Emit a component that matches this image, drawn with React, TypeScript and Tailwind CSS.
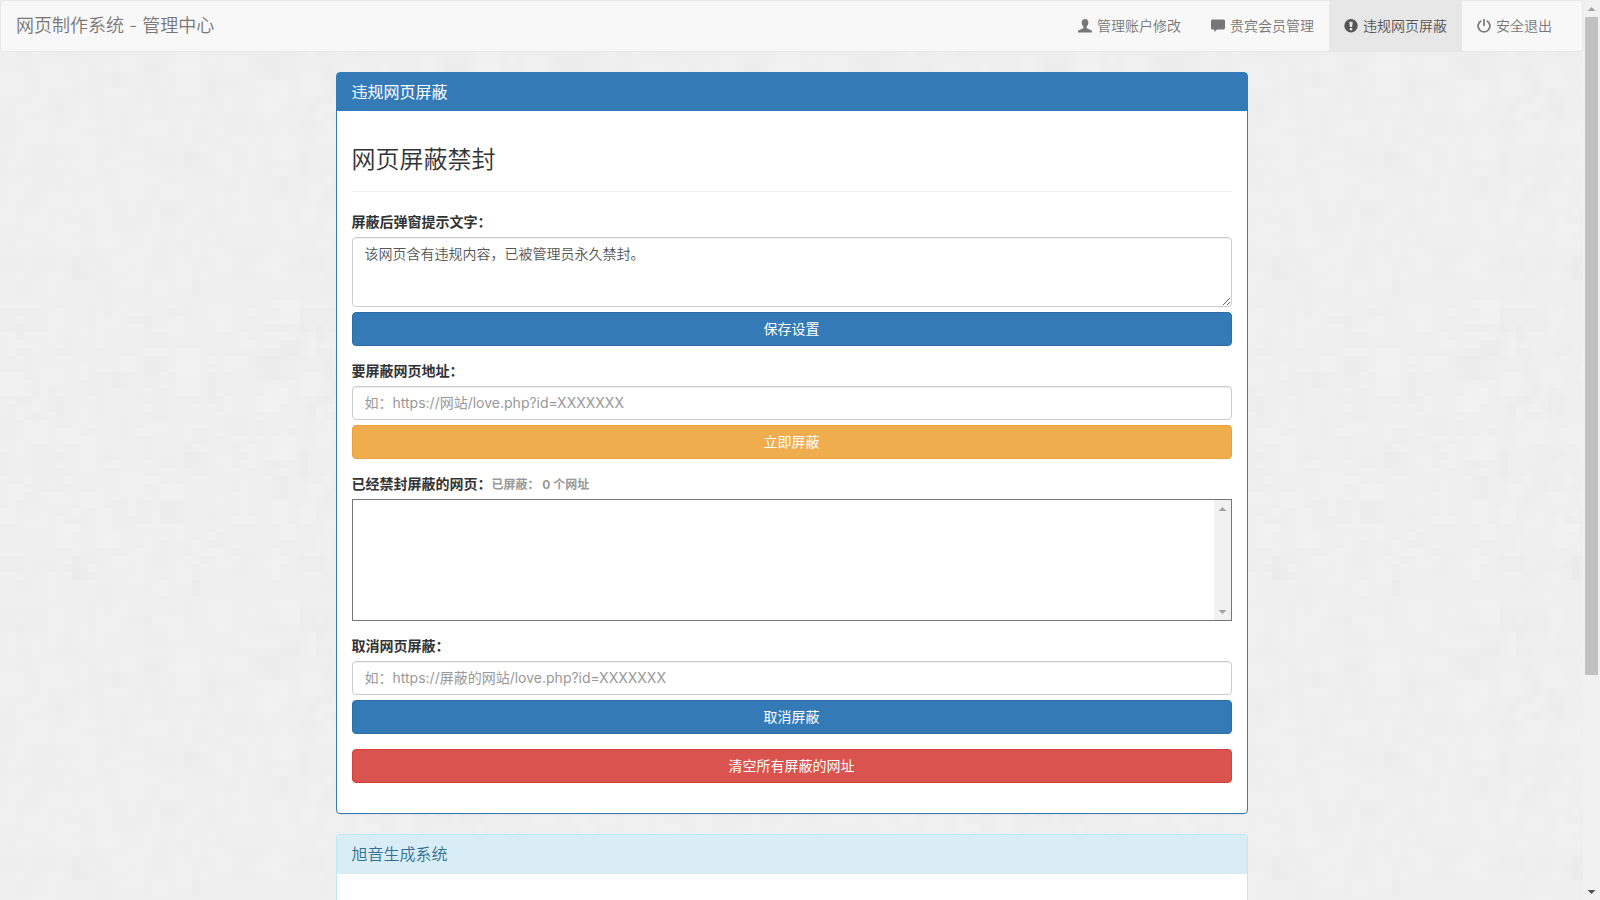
import type { ReactNode } from 'react';

interface IconProps {
  name: 'user' | 'comment' | 'alert' | 'power';
}

interface NavItem {
  label: string;
  icon: IconProps['name'];
  active?: boolean;
}

const navItems: NavItem[] = [
  { label: '管理账户修改', icon: 'user' },
  { label: '贵宾会员管理', icon: 'comment' },
  { label: '违规网页屏蔽', icon: 'alert', active: true },
  { label: '安全退出', icon: 'power' },
];

const TILE = 300;

// Small seeded generator so the paper texture is the same on every load
function buildTexture() {
  let seed = 41;
  const next = () => {
    seed = (seed * 16807) % 2147483647;
    return seed / 2147483647;
  };
  const shades = ['#ececec', '#ededed', '#f1f1f1', '#f3f3f3'];
  return Array.from({ length: 320 }, () => ({
    x: Math.floor(next() * 36) * 8,
    y: Math.floor(next() * 36) * 8,
    w: 8 + Math.floor(next() * 3) * 8,
    h: 8 + Math.floor(next() * 3) * 8,
    fill: shades[Math.floor(next() * shades.length)],
  }));
}

const texture = buildTexture();

function Icon({ name }: IconProps) {
  return (
    <svg viewBox="0 0 14 14" className="size-3.5 shrink-0" fill="currentColor" aria-hidden="true">
      {name === 'user' && (
        <path d="M7 0C4.900 0 3.600 1.500 3.600 3.600c0 1.500.7 3 1.700 3.900v1.200c0 .4-.2.700-.6.900L1.300 10.900C.5 11.300 0 11.700 0 12.500v1h14v-1c0-.8-.5-1.200-1.300-1.600L9.300 9.600c-.4-.2-.6-.5-.6-.9V7.500c1-.9 1.700-2.400 1.700-3.900C10.400 1.500 9.100 0 7 0z" />
      )}
      {name === 'comment' && (
        <path d="M1.500.4h11C13.300.4 14 1.100 14 1.900v7.200c0 .8-.7 1.500-1.500 1.500H6L3.300 13V10.600H1.500C.7 10.600 0 9.900 0 9.100V1.900C0 1.100.7.4 1.500.4z" />
      )}
      {name === 'alert' && (
        <path
          fillRule="evenodd"
          d="M7 0a6.700 6.700 0 1 0 0 13.400A6.700 6.700 0 0 0 7 0zM5.700 2.700h2.600c.2 0 .4.200.4.400L8.200 7.700c0 .2-.2.300-.4.300H6.200c-.2 0-.4-.1-.4-.3L5.300 3.100c0-.2.200-.4.400-.4zM6.100 9h1.800c.2 0 .3.100.3.300v1.600c0 .2-.1.300-.3.300H6.100c-.2 0-.3-.1-.3-.3V9.300c0-.2.100-.3.300-.3z"
        />
      )}
      {name === 'power' && (
        <g fill="none" stroke="currentColor" strokeWidth="1.700">
          <path d="M4.300 1.700a5.900 5.900 0 1 0 5.400 0" />
          <path d="M7 0v7" />
        </g>
      )}
    </svg>
  );
}

function Navbar() {
  return (
    <nav className="flex flex-wrap items-stretch justify-between rounded border border-[#e7e7e7] bg-[#f8f8f8] pr-[15px]">
      <a href="#home" className="px-[15px] py-[15px] text-lg leading-5 text-[#777]">
        网页制作系统 - 管理中心
      </a>
      <ul className="flex flex-wrap">
        {navItems.map((item) => (
          <li key={item.label}>
            <a
              href={`#${item.icon}`}
              className={`flex items-center gap-[5px] px-[15px] py-[15px] text-sm leading-5 ${
                item.active ? 'bg-[#e7e7e7] text-[#555]' : 'text-[#777] hover:text-[#333]'
              }`}
            >
              <Icon name={item.icon} />
              {item.label}
            </a>
          </li>
        ))}
      </ul>
    </nav>
  );
}

function FormGroup({ id, label, note, children }: { id: string; label: string; note?: string; children: ReactNode }) {
  return (
    <div className="mb-[15px] flex flex-col gap-[5px]">
      <label htmlFor={id} className="text-sm leading-5 font-bold">
        {label}
        {note && <small className="text-xs text-[#999]">{note}</small>}
      </label>
      {children}
    </div>
  );
}

const fieldClass =
  'block w-full rounded border border-[#ccc] bg-white px-3 py-1.5 text-sm leading-5 text-[#555] shadow-[inset_0_1px_1px_rgba(0,0,0,0.075)] outline-none placeholder:font-normal placeholder:text-[#999] focus:border-[#66afe9]';

const buttonTones = {
  primary: 'bg-[#337ab7] border-[#2e6da4]',
  warning: 'bg-[#f0ad4e] border-[#eea236]',
  danger: 'bg-[#d9534f] border-[#d43f3a]',
};

function Button({ tone, children }: { tone: keyof typeof buttonTones; children: ReactNode }) {
  return (
    <button
      type="button"
      className={`block w-full cursor-pointer rounded border px-3 py-1.5 text-center text-sm leading-5 font-normal text-white ${buttonTones[tone]}`}
    >
      {children}
    </button>
  );
}

function Arrow({ up = false, className }: { up?: boolean; className: string }) {
  return (
    <svg viewBox="0 0 17 17" className={`size-[17px] shrink-0 ${className}`} fill="currentColor" aria-hidden="true">
      <path d={up ? 'M4.500 11h8l-4-4z' : 'M4.500 7h8l-4 4z'} />
    </svg>
  );
}

export default function App() {
  return (
    <div className="relative isolate flex h-screen overflow-hidden bg-[#efefef] font-['Inter','Noto_Sans_CJK_SC',sans-serif] text-sm leading-5 font-[350] text-[#333]">
      <svg className="absolute inset-0 -z-10 size-full" aria-hidden="true">
        <defs>
          <pattern id="paper" width={TILE} height={TILE} patternUnits="userSpaceOnUse">
            {texture.map((block, i) => (
              <rect key={i} x={block.x} y={block.y} width={block.w} height={block.h} fill={block.fill} opacity="0.5" />
            ))}
          </pattern>
        </defs>
        <rect width="100%" height="100%" fill="url(#paper)" />
      </svg>

      <div className="min-w-0 flex-1 overflow-hidden">
        <Navbar />
        <main className="mx-auto mt-5 flex max-w-[912px] flex-col gap-5">
          <section className="rounded border border-[#337ab7] bg-white shadow-[0_1px_1px_rgba(0,0,0,0.05)]">
            <h2 className="bg-[#337ab7] px-[15px] py-[10px] text-base leading-[18px] font-normal text-white">
              违规网页屏蔽
            </h2>
            <form className="p-[15px]">
              <h3 className="my-5 border-b border-[#eee] pb-[17px] text-2xl leading-7">网页屏蔽禁封</h3>

              <FormGroup id="notice" label="屏蔽后弹窗提示文字：">
                <textarea
                  id="notice"
                  className={`${fieldClass} h-[70px] resize-y`}
                  defaultValue="该网页含有违规内容，已被管理员永久禁封。"
                />
                <Button tone="primary">保存设置</Button>
              </FormGroup>

              <FormGroup id="block-url" label="要屏蔽网页地址：">
                <input id="block-url" type="text" className={fieldClass} placeholder="如：https://网站/love.php?id=XXXXXXX" />
                <Button tone="warning">立即屏蔽</Button>
              </FormGroup>

              <FormGroup id="blocked" label="已经禁封屏蔽的网页：" note="已屏蔽： 0 个网址">
                <div className="flex h-[122px] border border-[#767676] bg-white">
                  <textarea id="blocked" readOnly className="min-w-0 flex-1 resize-none p-0.5 outline-none" />
                  <div className="flex flex-col justify-between bg-[#f1f1f1]">
                    <Arrow up className="text-[#a3a3a3]" />
                    <Arrow className="text-[#a3a3a3]" />
                  </div>
                </div>
              </FormGroup>

              <FormGroup id="unblock-url" label="取消网页屏蔽：">
                <input
                  id="unblock-url"
                  type="text"
                  className={fieldClass}
                  placeholder="如：https://屏蔽的网站/love.php?id=XXXXXXX"
                />
                <Button tone="primary">取消屏蔽</Button>
              </FormGroup>

              <div className="mb-[15px]">
                <Button tone="danger">清空所有屏蔽的网址</Button>
              </div>
            </form>
          </section>

          <section className="rounded border border-[#bce8f1] bg-white shadow-[0_1px_1px_rgba(0,0,0,0.05)]">
            <h2 className="border-b border-[#d3edf5] bg-[#d9edf7] px-[15px] py-[10px] text-base leading-[18px] text-[#31708f]">
              旭音生成系统
            </h2>
            <div className="h-20" />
          </section>
        </main>
      </div>

      <div className="flex w-[17px] shrink-0 flex-col bg-[#f1f1f1]">
        <Arrow up className="text-[#a3a3a3]" />
        <div className="min-h-0 flex-1 px-0.5">
          <div className="h-[76%] bg-[#c1c1c1]" />
        </div>
        <Arrow className="text-[#505050]" />
      </div>
    </div>
  );
}
